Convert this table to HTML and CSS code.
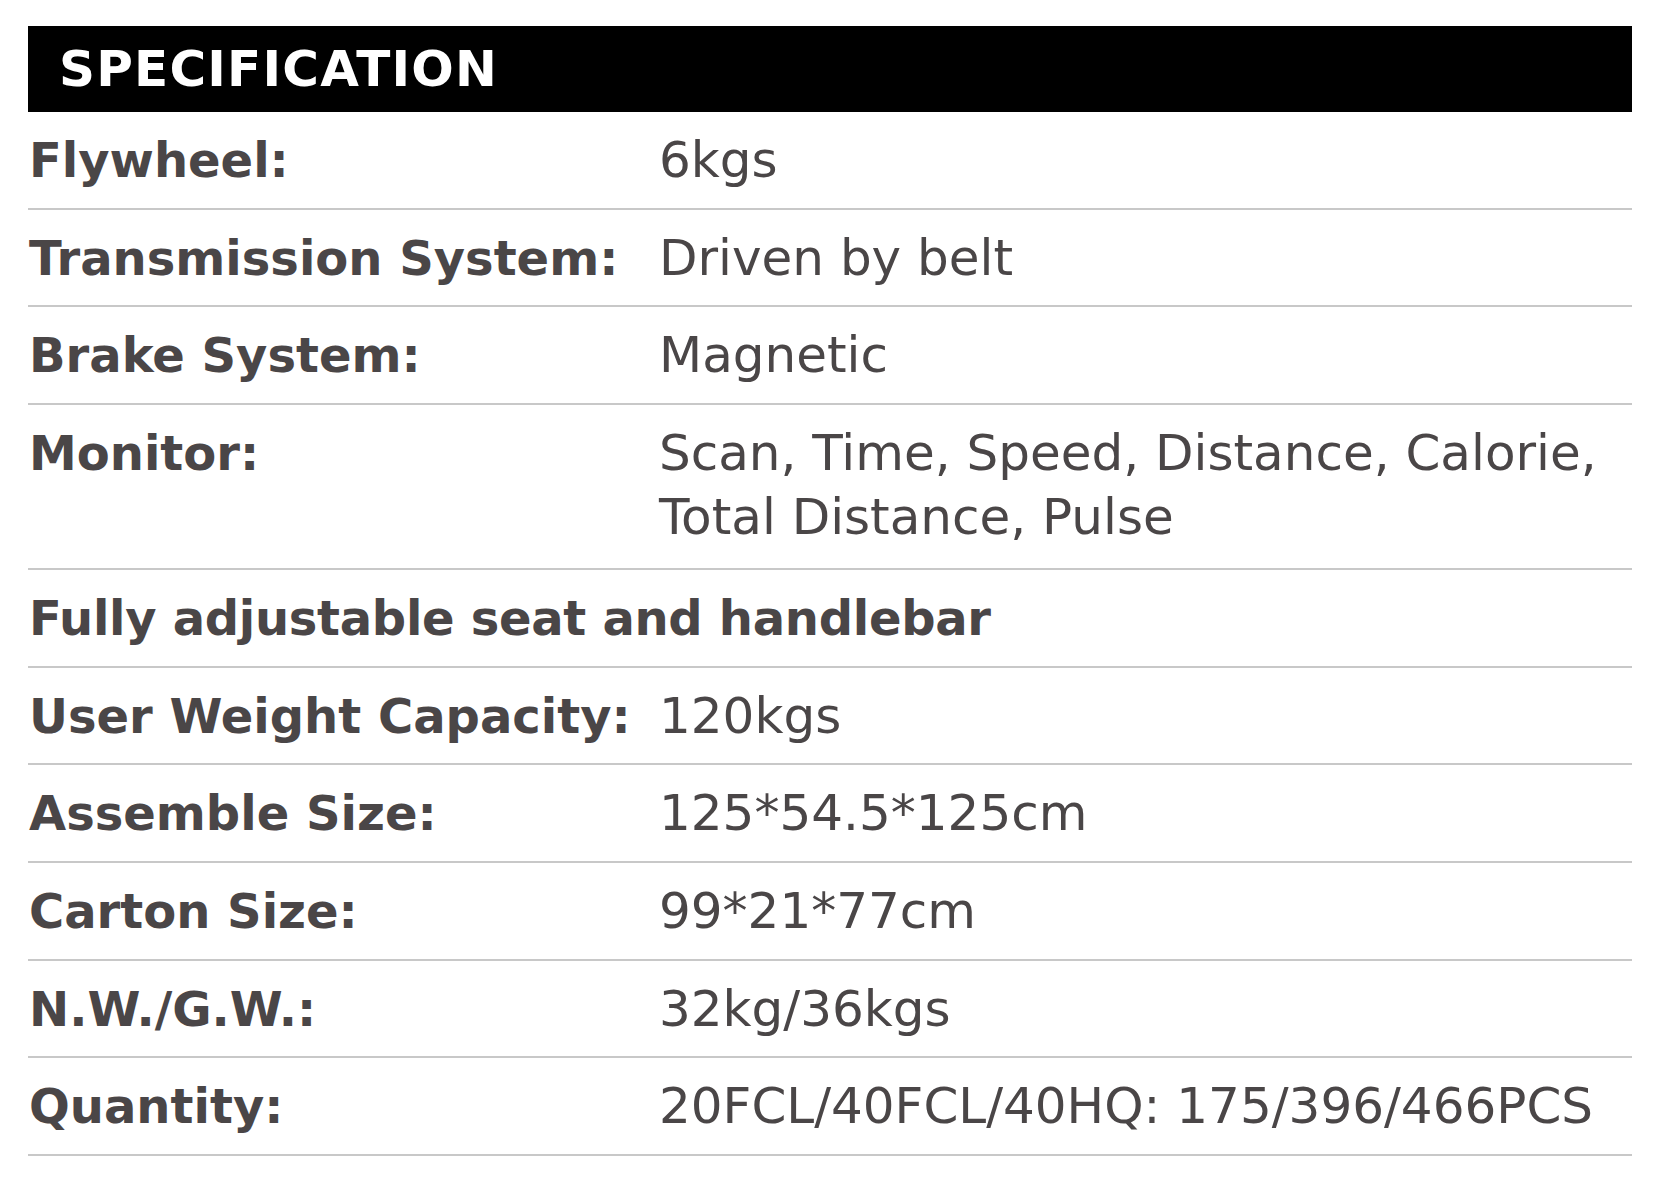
FILE: index.html
```html
<!DOCTYPE html>
<html lang="en">
<head>
<meta charset="utf-8">
<title>Specification</title>
<link rel="stylesheet" href="styles.css">
</head>
<body>
<section class="spec">
  <h1 class="spec-title">SPECIFICATION</h1>
  <div class="spec-row"><div class="spec-label">Flywheel:</div><div class="spec-value">6kgs</div></div>
  <div class="spec-row"><div class="spec-label">Transmission System:</div><div class="spec-value">Driven by belt</div></div>
  <div class="spec-row"><div class="spec-label">Brake System:</div><div class="spec-value">Magnetic</div></div>
  <div class="spec-row spec-row-tall"><div class="spec-label">Monitor:</div><div class="spec-value">Scan, Time, Speed, Distance, Calorie,<br>Total Distance, Pulse</div></div>
  <div class="spec-row"><div class="spec-label spec-full">Fully adjustable seat and handlebar</div></div>
  <div class="spec-row"><div class="spec-label">User Weight Capacity:</div><div class="spec-value">120kgs</div></div>
  <div class="spec-row"><div class="spec-label">Assemble Size:</div><div class="spec-value">125*54.5*125cm</div></div>
  <div class="spec-row"><div class="spec-label">Carton Size:</div><div class="spec-value">99*21*77cm</div></div>
  <div class="spec-row"><div class="spec-label">N.W./G.W.:</div><div class="spec-value">32kg/36kgs</div></div>
  <div class="spec-row"><div class="spec-label">Quantity:</div><div class="spec-value">20FCL/40FCL/40HQ: 175/396/466PCS</div></div>
</section>
</body>
</html>
```
FILE: styles.css
```css
html, body {
  margin: 0;
  padding: 0;
  background: #ffffff;
}

.spec {
  margin: 26px 0 0 28px;
  width: 1604px;
  font-family: "DejaVu Sans", "Open Sans", sans-serif;
  color: #4a4647;
}

.spec-title {
  margin: 0;
  height: 86px;
  background: #000000;
  color: #ffffff;
  font-size: 50px;
  font-weight: 700;
  line-height: 86px;
  padding-left: 31px;
  letter-spacing: 1.2px;
}

.spec-row {
  display: flex;
  padding: 16.85px 0;
  border-bottom: 2px solid #c8c8c8;
  line-height: 62px;
}

.spec-row-tall {
  padding-top: 15.85px;
  padding-bottom: 19.15px;
  line-height: 64px;
}

.spec-label {
  flex: 0 0 630px;
  font-size: 48px;
  font-weight: 700;
  padding-left: 1px;
  white-space: nowrap;
}

.spec-full {
  flex: 1 1 auto;
  letter-spacing: -0.3px;
}

.spec-value {
  flex: 1 1 auto;
  font-size: 50px;
  font-weight: 400;
  white-space: nowrap;
}
```
